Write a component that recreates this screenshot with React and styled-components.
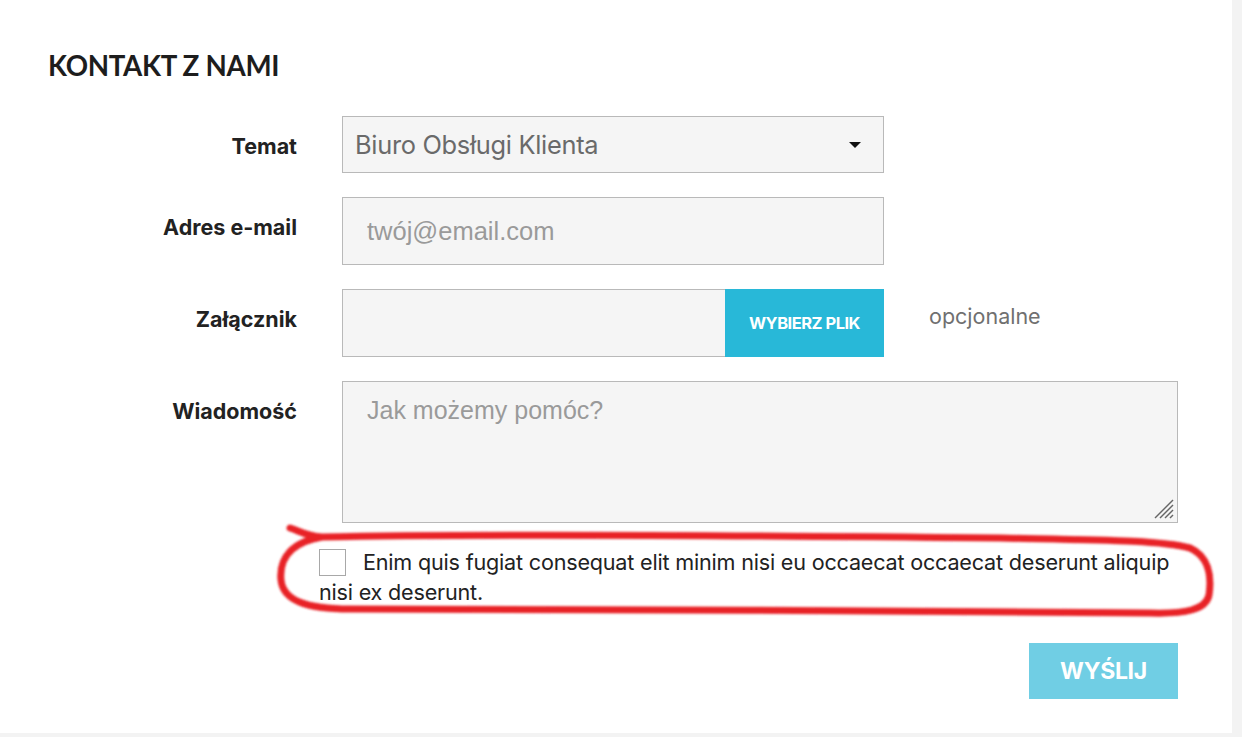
import styled, { createGlobalStyle } from 'styled-components';

const GlobalStyle = createGlobalStyle`
    body {
        margin: 0;
        background: #f3f3f3;
        font-family: Inter, "Noto Sans", sans-serif;
    }
`;

const Card = styled.main`
    position: relative;
    width: 1232px;
    height: 733px;
    box-sizing: border-box;
    background: #fff;
    padding: 50px 54px 0 48px;
`;

const Title = styled.h1`
    margin: 0 0 34px;
    font-family: Lato, sans-serif;
    font-weight: 700;
    font-size: 27.7px;
    line-height: 32px;
    color: #1d1d1d;
    letter-spacing: -0.3px;
`;

const Form = styled.form`
    display: grid;
    grid-template-columns: 249px 1fr;
    column-gap: 45px;
    row-gap: 24px;
`;

const Label = styled.label`
    text-align: right;
    font-weight: 700;
    font-size: 21.5px;
    color: #222;
    padding-top: ${ p => p.$top }px;
    line-height: 24px;
`;

const FieldBox = styled.div`
    position: relative;
    display: flex;
    align-items: center;
    width: ${ p => p.$width || '100%' };
    height: ${ p => p.$height }px;
    box-sizing: border-box;
    background: #f5f5f5;
    border: 1px solid #b9b9b9;
`;

const SelectText = styled.span`
    flex: 1;
    padding-left: 12px;
    font-size: 25.4px;
    color: #6a6a6a;
    letter-spacing: -0.3px;
`;

const Caret = styled.span`
    width: 0;
    height: 0;
    margin-right: 22px;
    border-left: 6px solid transparent;
    border-right: 6px solid transparent;
    border-top: 6px solid #111;
`;

const Placeholder = styled.span`
    align-self: ${ p => p.$top ? 'flex-start' : 'center' };
    padding: ${ p => p.$top ? '14px 0 0 24px' : '0 0 0 24px' };
    font-family: "Liberation Sans", Arial, sans-serif;
    font-size: ${ p => p.$top ? 25 : 25.5 }px;
    color: #9a9a9a;
`;

const FileRow = styled.div`
    display: flex;
    align-items: center;
    gap: 45px;
`;

const FileButton = styled.span`
    margin-left: auto;
    display: flex;
    align-items: center;
    justify-content: center;
    width: 159px;
    height: calc(100% + 2px);
    margin-right: -1px;
    background: #28b8d8;
    color: #fff;
    font-weight: 700;
    font-size: 16.5px;
    letter-spacing: -0.5px;
`;

const Hint = styled.span`
    font-size: 21.5px;
    color: #707070;
    margin-top: -14px;
`;

const Grip = styled.svg`
    position: absolute;
    right: 2px;
    bottom: 2px;
`;

const Consent = styled.p`
    margin: 24px 0 0 271px;
    width: 862px;
    font-size: 21.6px;
    line-height: 30px;
    color: #222;
    letter-spacing: -0.2px;
`;

const Box = styled.span`
    display: inline-block;
    width: 25px;
    height: 25px;
    border: 1px solid #a8a8a8;
    background: #fff;
    vertical-align: -6px;
    margin-right: 17px;
`;

const Actions = styled.div`
    display: flex;
    justify-content: flex-end;
    margin-top: 36px;
`;

const Submit = styled.button`
    width: 149px;
    height: 56px;
    border: none;
    background: #70cee4;
    color: #fff;
    font-family: Inter, sans-serif;
    font-weight: 700;
    font-size: 23px;
    letter-spacing: -0.3px;
`;

const Scribble = styled.svg`
    position: absolute;
    left: 0;
    top: 0;
    pointer-events: none;
`;

export default function App() {
    return (
        <>
            <GlobalStyle />
            <Card>
                <Title>KONTAKT Z NAMI</Title>

                <Form>
                    <Label $top={18}>Temat</Label>
                    <FieldBox $width="542px" $height={57}>
                        <SelectText>Biuro Obsługi Klienta</SelectText>
                        <Caret />
                    </FieldBox>

                    <Label $top={18}>Adres e-mail</Label>
                    <FieldBox $width="542px" $height={68}>
                        <Placeholder>twój@email.com</Placeholder>
                    </FieldBox>

                    <Label $top={18}>Załącznik</Label>
                    <FileRow>
                        <FieldBox $width="542px" $height={68}>
                            <FileButton>WYBIERZ PLIK</FileButton>
                        </FieldBox>
                        <Hint>opcjonalne</Hint>
                    </FileRow>

                    <Label $top={18}>Wiadomość</Label>
                    <FieldBox $height={142}>
                        <Placeholder $top>Jak możemy pomóc?</Placeholder>
                        <Grip width="22" height="22" viewBox="0 0 22 22">
                            <g stroke="#666" strokeWidth="1.4">
                                <line x1="2" y1="20" x2="20" y2="2" />
                                <line x1="7" y1="20" x2="20" y2="7" />
                                <line x1="12" y1="20" x2="20" y2="12" />
                                <line x1="17" y1="20" x2="20" y2="17" />
                            </g>
                        </Grip>
                    </FieldBox>
                </Form>

                <Consent>
                    <Box />
                    Enim quis fugiat consequat elit minim nisi eu occaecat occaecat deserunt aliquip nisi ex deserunt.
                </Consent>

                <Actions>
                    <Submit type="button">WYŚLIJ</Submit>
                </Actions>

                <Scribble width="1232" height="733">
                    <defs>
                        <filter id="soft">
                            <feGaussianBlur stdDeviation="0.8" />
                        </filter>
                    </defs>
                    <path
                        d="M 290 528 C 300 531, 306 536, 322 537 C 500 533, 800 536, 1000 538 C 1100 540, 1160 540, 1190 548 C 1208 556, 1212 575, 1209 595 C 1206 610, 1185 614, 1150 613 C 900 612, 600 608, 350 609 C 305 609, 283 600, 281 580 C 279 558, 292 542, 322 537"
                        fill="none"
                        stroke="#e82228"
                        strokeWidth="7"
                        strokeLinecap="round"
                        filter="url(#soft)"
                    />
                </Scribble>
            </Card>
        </>
    );
}
